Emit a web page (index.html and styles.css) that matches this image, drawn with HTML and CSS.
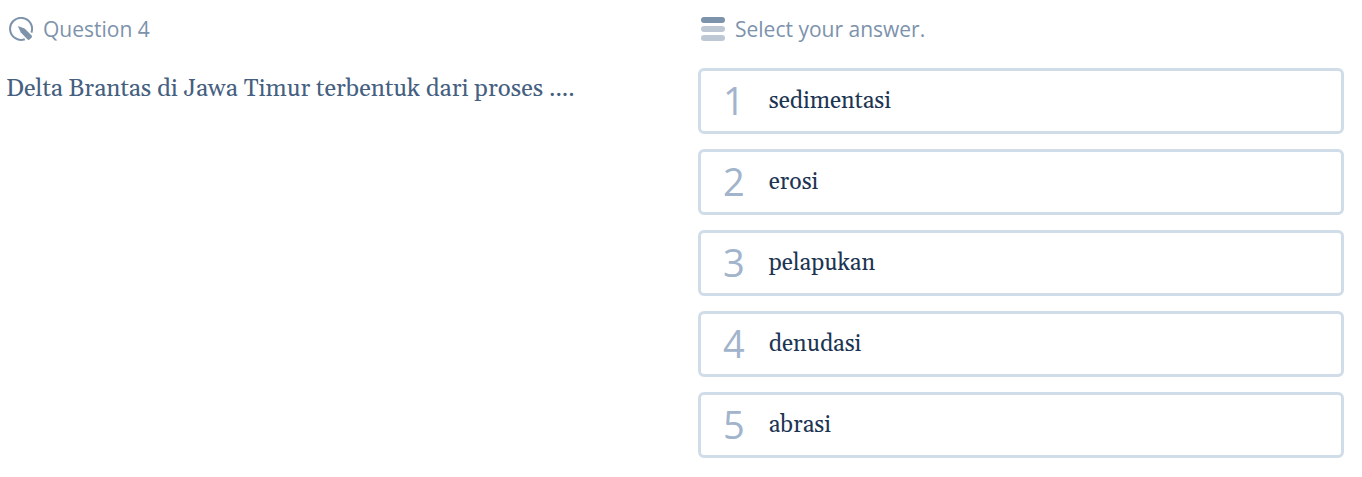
FILE: index.html
```html
<!DOCTYPE html>
<html lang="id">
<head>
    <meta charset="UTF-8">
    <meta name="viewport" content="width=device-width, initial-scale=1.0">
    <title>Question 4</title>
    <link rel="stylesheet" href="styles.css">
</head>
<body>
    <main class="quiz">
        <!-- Question -->
        <section class="question">
            <h2 class="heading">
                <svg class="icon" viewBox="0 0 24 24" aria-hidden="true">
                    <path d="M15.8 22.2A11 11 0 1 1 22.4 15.6" fill="none" stroke="#7d92ab" stroke-width="2"/>
                    <path d="M8.8 9L15.6 11.5L22.6 18.6Q23.4 19.6 22.6 20.5L20.6 22.5Q19.6 23.3 18.6 22.4L11.8 15.6Z" fill="#7d92ab"/>
                </svg>
                Question 4
            </h2>
            <p class="question-text">Delta Brantas di Jawa Timur terbentuk dari proses ....</p>
        </section>

        <!-- Answers -->
        <section class="answers">
            <h2 class="heading">
                <svg class="icon" viewBox="0 0 24 24" aria-hidden="true">
                    <rect width="24" height="6" rx="3" fill="#7d92ab"/>
                    <rect y="9" width="24" height="6" rx="3" fill="#bec8d5"/>
                    <rect y="18" width="24" height="6" rx="3" fill="#bec8d5"/>
                </svg>
                Select your answer.
            </h2>
            <div class="answer-list">
                <button type="button" class="answer"><span class="number">1</span><span class="text">sedimentasi</span></button>
                <button type="button" class="answer"><span class="number">2</span><span class="text">erosi</span></button>
                <button type="button" class="answer"><span class="number">3</span><span class="text">pelapukan</span></button>
                <button type="button" class="answer"><span class="number">4</span><span class="text">denudasi</span></button>
                <button type="button" class="answer"><span class="number">5</span><span class="text">abrasi</span></button>
            </div>
        </section>
    </main>
</body>
</html>
```
FILE: styles.css
```css
body {
    margin: 0;
    background-color: #fff;
    font-family: Georgia, Gelasio, "Liberation Serif", serif;
}
.quiz {
    display: grid;
    grid-template-columns: 1fr 1fr;
    gap: 46px;
    padding: 14px 18px 19px 6px;
}
.heading {
    display: flex;
    align-items: center;
    gap: 10px;
    margin: 0;
    padding: 0 3px;
    color: #7d92ab;
    font-family: "Open Sans", sans-serif;
    font-size: 21px;
    font-weight: 400;
    line-height: 30px;
}
.icon {
    width: 24px;
    height: 24px;
}
.question-text {
    margin: 29px 0 0;
    color: #456080;
    font-size: 24px;
    line-height: 32px;
}
.answer-list {
    display: flex;
    flex-direction: column;
    gap: 15px;
    margin-top: 24px;
}
.answer {
    display: flex;
    align-items: center;
    gap: 24px;
    padding: 10px 22px;
    background-color: #fff;
    border: 3px solid #d0dde9;
    border-radius: 6px;
    color: #1c3553;
    font-family: inherit;
    font-size: 23px;
    line-height: 38px;
    text-align: left;
    cursor: pointer;
}
.answer:hover {
    border-color: #a1b4cc;
}
.number {
    padding-bottom: 2px;
    color: #a1b4cc;
    font-family: "Open Sans", sans-serif;
    font-size: 38px;
}
.text {
    padding-top: 2px;
}
```
